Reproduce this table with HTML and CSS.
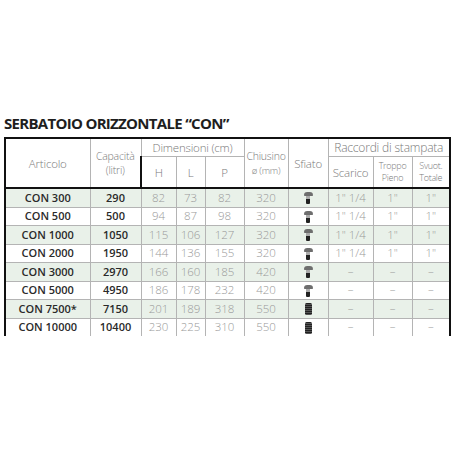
FILE: index.html
```html
<!DOCTYPE html>
<html>
<head>
<meta charset="utf-8">
<link rel="stylesheet" href="styles.css">
</head>
<body>
<div class="page">
  <h1 class="title">SERBATOIO ORIZZONTALE “CON”</h1>
  <table class="spec">
    <colgroup>
      <col class="c-art"><col class="c-cap"><col class="c-h"><col class="c-l"><col class="c-p">
      <col class="c-chi"><col class="c-sfi"><col class="c-sca"><col class="c-tro"><col class="c-svu">
    </colgroup>
    <thead>
      <tr class="h1">
        <th rowspan="2">Articolo</th>
        <th rowspan="2" class="small">Capacità<br>(litri)</th>
        <th colspan="3">Dimensioni (cm)</th>
        <th rowspan="2" class="small">Chiusino<br><span class="mm">ø (mm)</span></th>
        <th rowspan="2">Sfiato</th>
        <th colspan="3" class="big">Raccordi di stampata</th>
      </tr>
      <tr class="h2">
        <th>H</th><th>L</th><th>P</th>
        <th>Scarico</th>
        <th class="tiny">Troppo<br>Pieno</th>
        <th class="tiny">Svuot.<br>Totale</th>
      </tr>
    </thead>
    <tbody>
      <tr class="alt"><td class="b">CON 300</td><td class="b">290</td><td>82</td><td>73</td><td>82</td><td>320</td><td><span class="mush"></span></td><td>1" 1/4</td><td>1"</td><td>1"</td></tr>
      <tr><td class="b">CON 500</td><td class="b">500</td><td>94</td><td>87</td><td>98</td><td>320</td><td><span class="mush"></span></td><td>1" 1/4</td><td>1"</td><td>1"</td></tr>
      <tr class="alt"><td class="b">CON 1000</td><td class="b">1050</td><td>115</td><td>106</td><td>127</td><td>320</td><td><span class="mush"></span></td><td>1" 1/4</td><td>1"</td><td>1"</td></tr>
      <tr><td class="b">CON 2000</td><td class="b">1950</td><td>144</td><td>136</td><td>155</td><td>320</td><td><span class="mush"></span></td><td>1" 1/4</td><td>1"</td><td>1"</td></tr>
      <tr class="alt"><td class="b">CON 3000</td><td class="b">2970</td><td>166</td><td>160</td><td>185</td><td>420</td><td><span class="mush"></span></td><td>–</td><td>–</td><td>–</td></tr>
      <tr><td class="b">CON 5000</td><td class="b">4950</td><td>186</td><td>178</td><td>232</td><td>420</td><td><span class="mush"></span></td><td>–</td><td>–</td><td>–</td></tr>
      <tr class="alt"><td class="b">CON 7500*</td><td class="b">7150</td><td>201</td><td>189</td><td>318</td><td>550</td><td><span class="grid"></span></td><td>–</td><td>–</td><td>–</td></tr>
      <tr class="last"><td class="b">CON 10000</td><td class="b">10400</td><td>230</td><td>225</td><td>310</td><td>550</td><td><span class="grid"></span></td><td>–</td><td>–</td><td>–</td></tr>
    </tbody>
  </table>
</div>
</body>
</html>
```
FILE: styles.css
```css
html, body { margin: 0; padding: 0; background: #fff; }
.page { padding: 116px 3px 0 4px; font-family: "Open Sans", "Liberation Sans", sans-serif; }
.title {
  margin: 0 0 6px 0;
  font-size: 15px;
  line-height: 15px;
  font-weight: 700;
  color: #1e1e1e;
  letter-spacing: -0.7px;
}
.spec {
  border-collapse: collapse;
  table-layout: fixed;
  width: 445px;
  color: #888;
}
.c-art { width: 85px; } .c-cap { width: 51px; } .c-h { width: 35px; } .c-l { width: 29px; }
.c-p { width: 39px; } .c-chi { width: 44px; } .c-sfi { width: 40px; } .c-sca { width: 45px; }
.c-tro { width: 39px; } .c-svu { width: 38px; }
.spec th, .spec td {
  border: 1.5px solid #b4b4b4;
  padding: 0;
  text-align: center;
  vertical-align: middle;
}
.spec th {
  font-weight: 300;
  color: #7a7a7a;
  font-size: 11.5px;
  line-height: 13px;
  letter-spacing: -0.2px;
}
.spec thead tr.h1 th { height: 17px; border-top: 2px solid #111; }
.spec thead tr.h2 th { height: 30px; border-bottom: 2px solid #111; }
.spec thead tr.h1 th[rowspan] { border-bottom: 2px solid #111; }
.spec th.small { font-size: 10.5px; line-height: 14px; }
.spec th .mm { font-size: 9.5px; }
.spec th.tiny { font-size: 9px; line-height: 12.5px; letter-spacing: -0.3px; }
.spec th.big { font-size: 12px; }
.spec tr > :first-child { border-left: 2px solid #111; }
.spec tr > :last-child { border-right: 2px solid #111; }
.spec td {
  height: 17.5px;
  font-size: 11.5px;
  font-weight: 300;
  color: #999;
  line-height: 12px;
}
.spec td.b { font-weight: 600; color: #2a2a2a; font-size: 11px; }
.spec tr.alt td { background: #e9f1e9; }
.spec tr.last td { border-bottom: none; }
.mush {
  display: inline-block;
  position: relative;
  width: 9px; height: 12px;
  vertical-align: middle;
}
.mush::before {
  content: "";
  position: absolute; left: 0; top: 0;
  width: 9px; height: 4px;
  background: #6e6e6e;
  border-radius: 4.5px 4.5px 1px 1px;
}
.mush::after {
  content: "";
  position: absolute; left: 2.5px; top: 4px;
  width: 4px; height: 8px;
  background: linear-gradient(#aaa 0 35%, #222 35% 100%);
  border-radius: 0 0 1px 1px;
}
.grid {
  display: inline-block;
  width: 7px; height: 12px;
  background: repeating-linear-gradient(#222 0 1px, #555 1px 2px);
  border-radius: 1.5px;
  vertical-align: middle;
}
```
